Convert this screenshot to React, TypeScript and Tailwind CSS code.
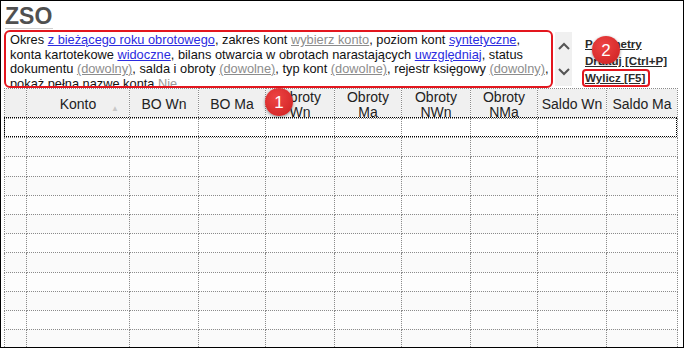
import React from "react";

const cols = [
  { w: 22, label: "" },
  { w: 103, label: "Konto", sort: true },
  { w: 69, label: "BO Wn" },
  { w: 67, label: "BO Ma" },
  { w: 69, label: "Obroty Wn" },
  { w: 67, label: "Obroty Ma" },
  { w: 69, label: "Obroty NWn" },
  { w: 67, label: "Obroty NMa" },
  { w: 69, label: "Saldo Wn" },
  { w: 71, label: "Saldo Ma" },
];

const rows = Array.from({ length: 12 }, (_, i) => i);

function BlueLink({ children }: { children: React.ReactNode }) {
  return <span className="text-[#2b2bdf] underline decoration-[#2b2bdf]">{children}</span>;
}

function GrayLink({ children }: { children: React.ReactNode }) {
  return <span className="text-[#8c8c8c] underline decoration-[#8c8c8c]">{children}</span>;
}

function Badge({ n, className }: { n: string; className: string }) {
  return (
    <div
      className={`absolute w-[28px] h-[28px] rounded-full bg-[radial-gradient(circle_at_40%_35%,#ee4444,#cc1f1f)] shadow-[0_1px_3px_rgba(0,0,0,0.45)] flex items-center justify-center text-white text-[17px] leading-none ${className}`}
    >
      {n}
    </div>
  );
}

export default function App() {
  return (
    <div className="relative w-[684px] h-[348px] border border-black bg-white overflow-hidden font-['Liberation_Sans',Arial,sans-serif] text-[#111]">
      <div className="h-[29px] pl-[4px] pt-[3px]">
        <h1 className="inline-block text-[23px] font-bold leading-[24px] text-[#505050] border-b border-[#d0d0d0] pr-[1px]">ZSO</h1>
      </div>

      <div className="flex h-[58px] pl-[3px]">
        <div className="w-[549px] h-[58px] border-2 border-[#e3161e] rounded-[6px] pl-[4px] pt-[1px] overflow-hidden whitespace-nowrap text-[12.8px] leading-[14.5px]">
          <div>
            Okres <BlueLink>z bieżącego roku obrotowego</BlueLink>, zakres kont <GrayLink>wybierz konto</GrayLink>, poziom kont{" "}
            <BlueLink>syntetyczne</BlueLink>,
          </div>
          <div>
            konta kartotekowe <BlueLink>widoczne</BlueLink>, bilans otwarcia w obrotach narastających <BlueLink>uwzględniaj</BlueLink>, status
          </div>
          <div>
            dokumentu <GrayLink>(dowolny)</GrayLink>, salda i obroty <GrayLink>(dowolne)</GrayLink>, typ kont <GrayLink>(dowolne)</GrayLink>, rejestr
            księgowy <GrayLink>(dowolny)</GrayLink>,
          </div>
          <div>
            pokaż pełną nazwę konta <span className="text-[#999]">Nie</span>
          </div>
        </div>

        <div className="ml-[2px] mt-[2px] w-[17px] h-[54px] bg-[#f0f0f0] flex flex-col justify-between items-center py-[10px]">
          <svg width="12" height="8" viewBox="0 0 12 8">
            <polyline points="1,7 6,2 11,7" fill="none" stroke="#555" strokeWidth="2" />
          </svg>
          <svg width="12" height="8" viewBox="0 0 12 8">
            <polyline points="1,1 6,6 11,1" fill="none" stroke="#555" strokeWidth="2" />
          </svg>
        </div>

        <div className="ml-[10px] pt-[5px] flex flex-col items-start whitespace-nowrap text-[11.6px] font-bold leading-[17px] text-[#2a2a2a]">
          <span className="underline pl-[3px]">Parametry</span>
          <span className="underline pl-[3px]">Drukuj [Ctrl+P]</span>
          <span className="underline border-2 border-[#e3161e] rounded-[4px] pl-[1px] pr-[3px] leading-[14px] h-[18px]">Wylicz [F5]</span>
        </div>
      </div>

      <div className="relative ml-[3px] w-[673px]">
        <table className="border-collapse table-fixed w-[673px] text-[14px]">
          <colgroup>
            {cols.map((c, i) => (
              <col key={i} style={{ width: c.w }} />
            ))}
          </colgroup>
          <thead>
            <tr className="h-[30px] bg-[#f0f0f0]">
              {cols.map((c, i) => (
                <th key={i} className="relative p-0 border border-dotted border-[#8a8a8a] font-normal text-[#222] leading-[15px] text-center align-middle overflow-hidden">
                  <div className="h-[29px] overflow-hidden flex items-center justify-center px-[3px] pt-[2px]">
                    <span>{c.label}</span>
                  </div>
                  {c.sort && <span className="absolute right-[10px] top-[12px] text-[8px] text-[#c8c8c8]">▲</span>}
                </th>
              ))}
            </tr>
          </thead>
          <tbody>
            {rows.map((r) => (
              <tr key={r} className={`h-[19.2px] ${r === 0 ? "bg-white" : r % 2 === 1 ? "bg-[#fafafa]" : "bg-[#fdfdfd]"}`}>
                {cols.map((_, i) => (
                  <td key={i} className="p-0 border border-dotted border-[#8a8a8a]" />
                ))}
              </tr>
            ))}
          </tbody>
        </table>
        <div className="absolute left-0 top-[29px] w-[673px] h-[20px] border border-dotted border-black pointer-events-none" />
      </div>

      <Badge n="1" className="left-[264px] top-[87px]" />
      <Badge n="2" className="left-[591px] top-[35px]" />
    </div>
  );
}
